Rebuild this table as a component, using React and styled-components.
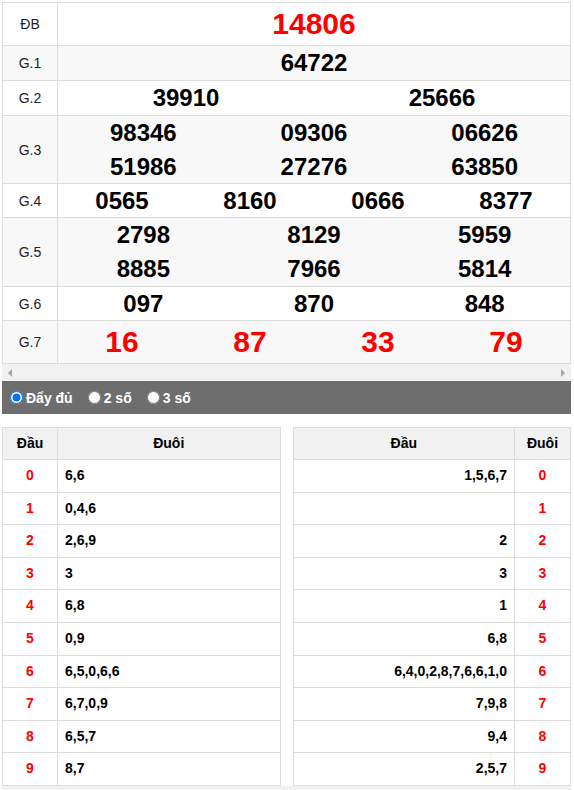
import styled, { createGlobalStyle } from "styled-components";

// 전역 스타일

const GlobalStyle = createGlobalStyle`
  body {
    margin: 0;
    background: #fff;
    font-family: "Liberation Sans", Arial, sans-serif;
    color: #000;
  }
`;

const Page = styled.div`
  width: 569px;
  padding: 2px 0 0 2px;
`;

const PrizeTable = styled.div`
  border: 1px solid #dddddd;
  border-bottom: none;
`;

const PrizeRow = styled.div`
  display: grid;
  grid-template-columns: 55px 1fr;
  border-bottom: 1px solid #dddddd;
  background: ${(props) => (props.$alt ? "#f8f8f8" : "#fff")};
`;

const PrizeLabel = styled.div`
  display: flex;
  align-items: center;
  justify-content: center;
  border-right: 1px solid #dddddd;
  font-size: 14px;
  color: #222;
`;

const PrizeNumbers = styled.div`
  display: grid;
  grid-template-columns: repeat(${(props) => props.$cols}, 1fr);
`;

const PrizeNumber = styled.div`
  text-align: center;
  font-weight: bold;
  font-size: ${(props) => (props.$big ? "30px" : "24px")};
  line-height: ${(props) => props.$h}px;
  color: ${(props) => (props.$big ? "#ff0000" : "#000")};
`;

const ScrollBar = styled.div`
  height: 17px;
  background: #f1f1f1;
  display: flex;
  align-items: center;
  justify-content: space-between;
  padding: 0 6px;
`;

const Arrow = styled.span`
  width: 0;
  height: 0;
  border-top: 4px solid transparent;
  border-bottom: 4px solid transparent;
  ${(props) => (props.$right ? "border-left: 4px solid #a3a3a3;" : "border-right: 4px solid #a3a3a3;")}
`;

const OptionBar = styled.div`
  height: 33px;
  background: #6e6e6e;
  display: flex;
  align-items: center;
  padding-left: 3px;
`;

const OptionLabel = styled.label`
  display: flex;
  align-items: center;
  margin-right: 10px;
  color: #fff;
  font-weight: bold;
  font-size: 14px;

  input {
    margin: 0 3px 0 5px;
    width: 13px;
    height: 13px;
  }
`;

const LotoWrap = styled.div`
  display: grid;
  grid-template-columns: 1fr 1fr;
  gap: 12px;
  margin-top: 13px;
`;

const LotoTable = styled.div`
  border: 1px solid #dddddd;
  border-bottom: none;
`;

const LotoRow = styled.div`
  display: grid;
  grid-template-columns: ${(props) => (props.$reverse ? "1fr 55px" : "55px 1fr")};
  border-bottom: 1px solid #dddddd;
  background: ${(props) => (props.$head ? "#f1f1f1" : "#fff")};
  font-size: 14px;
  font-weight: bold;
  line-height: ${(props) => (props.$head ? "31px" : "31.6px")};
`;

const LotoCell = styled.div`
  text-align: ${(props) => props.$align};
  padding: 0 7px;
  color: ${(props) => (props.$red ? "#ff0000" : "#000")};
  border-right: ${(props) => (props.$divider ? "1px solid #dddddd" : "none")};
  white-space: nowrap;
`;

const BottomStrip = styled.div`
  height: 6px;
  background: #f1f1f1;
`;

const prizes = [
  { label: "ĐB", cols: 1, h: 42, big: true, nums: ["14806"] },
  { label: "G.1", cols: 1, h: 34, alt: true, nums: ["64722"] },
  { label: "G.2", cols: 2, h: 34, nums: ["39910", "25666"] },
  { label: "G.3", cols: 3, h: 33.5, alt: true, nums: ["98346", "09306", "06626", "51986", "27276", "63850"] },
  { label: "G.4", cols: 4, h: 33, nums: ["0565", "8160", "0666", "8377"] },
  { label: "G.5", cols: 3, h: 34, alt: true, nums: ["2798", "8129", "5959", "8885", "7966", "5814"] },
  { label: "G.6", cols: 3, h: 33, nums: ["097", "870", "848"] },
  { label: "G.7", cols: 4, h: 42, big: true, alt: true, nums: ["16", "87", "33", "79"] },
];

const dau = ["6,6", "0,4,6", "2,6,9", "3", "6,8", "0,9", "6,5,0,6,6", "6,7,0,9", "6,5,7", "8,7"];
const duoi = ["1,5,6,7", "", "2", "3", "1", "6,8", "6,4,0,2,8,7,6,6,1,0", "7,9,8", "9,4", "2,5,7"];

export default function App() {
  return (
    <>
      <GlobalStyle />
      <Page>
        <PrizeTable>
          {prizes.map((p) => (
            <PrizeRow key={p.label} $alt={p.alt}>
              <PrizeLabel>{p.label}</PrizeLabel>
              <PrizeNumbers $cols={p.cols}>
                {p.nums.map((n, i) => (
                  <PrizeNumber key={i} $big={p.big} $h={p.h}>
                    {n}
                  </PrizeNumber>
                ))}
              </PrizeNumbers>
            </PrizeRow>
          ))}
        </PrizeTable>
        <ScrollBar>
          <Arrow />
          <Arrow $right />
        </ScrollBar>
        <OptionBar>
          <OptionLabel>
            <input type="radio" name="mode" defaultChecked />
            Đẩy đủ
          </OptionLabel>
          <OptionLabel>
            <input type="radio" name="mode" />2 số
          </OptionLabel>
          <OptionLabel>
            <input type="radio" name="mode" />3 số
          </OptionLabel>
        </OptionBar>
        <LotoWrap>
          <LotoTable>
            <LotoRow $head>
              <LotoCell $align="center" $divider>
                Đầu
              </LotoCell>
              <LotoCell $align="center">Đuôi</LotoCell>
            </LotoRow>
            {dau.map((v, i) => (
              <LotoRow key={i}>
                <LotoCell $align="center" $red $divider>
                  {i}
                </LotoCell>
                <LotoCell $align="left">{v}</LotoCell>
              </LotoRow>
            ))}
          </LotoTable>
          <LotoTable>
            <LotoRow $head $reverse>
              <LotoCell $align="center" $divider>
                Đầu
              </LotoCell>
              <LotoCell $align="center">Đuôi</LotoCell>
            </LotoRow>
            {duoi.map((v, i) => (
              <LotoRow key={i} $reverse>
                <LotoCell $align="right" $divider>
                  {v || "\u00a0"}
                </LotoCell>
                <LotoCell $align="center" $red>
                  {i}
                </LotoCell>
              </LotoRow>
            ))}
          </LotoTable>
        </LotoWrap>
        <BottomStrip />
      </Page>
    </>
  );
}
